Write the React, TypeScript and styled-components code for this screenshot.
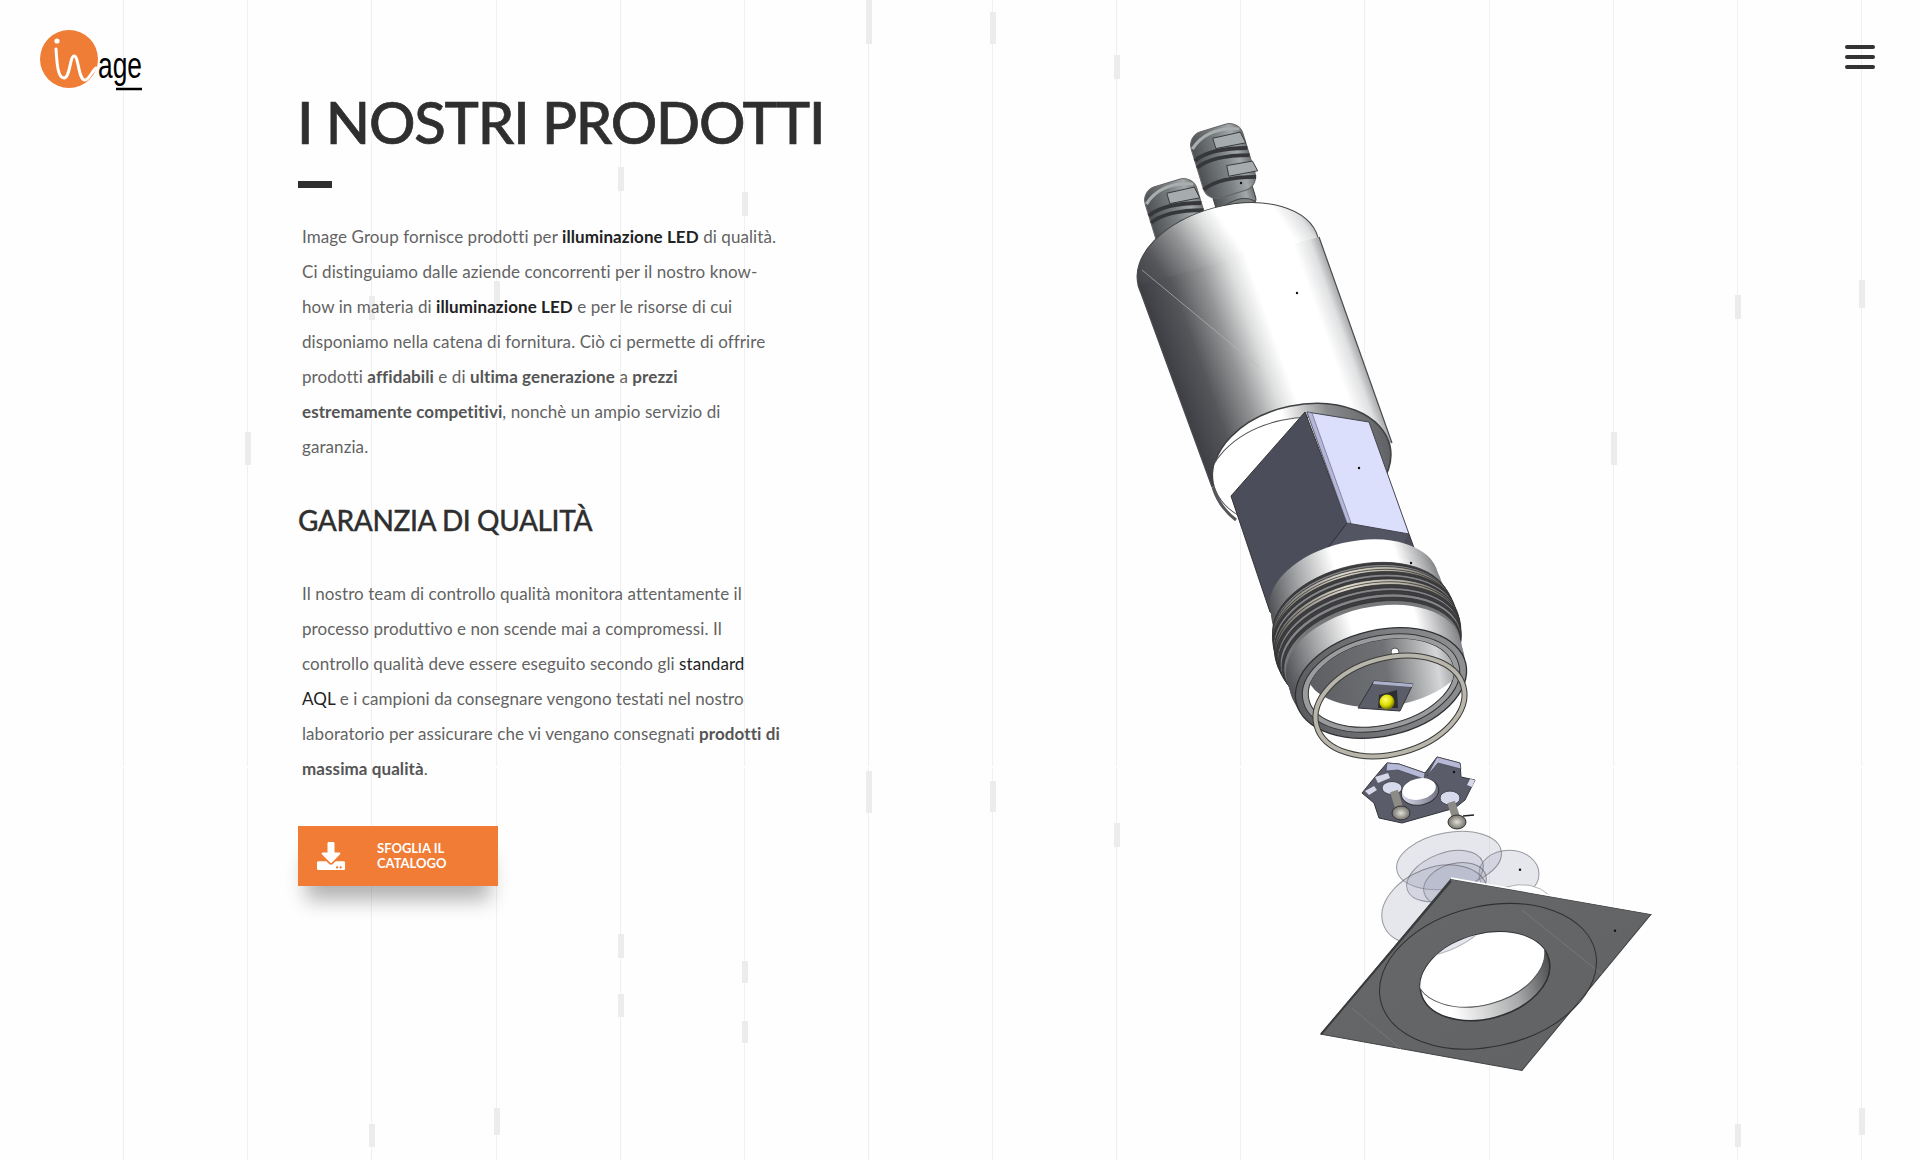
import React from 'react';
import styled, { createGlobalStyle } from 'styled-components';
import { FaDownload } from 'react-icons/fa';

const GlobalStyle = createGlobalStyle`
  html, body { margin: 0; padding: 0; background: #fefefe; }
`;

// [column, top, height] of the grey drops that sit on the background lines
const drops = [
  [7, 0, 44], [8, 12, 32], [9, 55, 24], [5, 167, 24], [6, 192, 24], [15, 280, 28], [14, 295, 24],
  [3, 296, 24], [4, 281, 27], [2, 432, 33], [13, 432, 33], [7, 771, 42], [8, 781, 31], [9, 823, 24],
  [5, 934, 24], [6, 961, 22], [5, 994, 23], [6, 1021, 22], [4, 1108, 27], [3, 1124, 23], [14, 1124, 23], [15, 1108, 27],
];

const columns = Array.from({ length: 15 }, (_, i) => i + 1);

const Logo = () => (
  <LogoSvg viewBox="0 0 120 64">
    <circle cx="29" cy="30" r="29" fill="#ef7d35" />
    <circle cx="17" cy="12" r="2.6" fill="#fff" />
    <path
      d="M16 20 C17 36 18 49 24 49 C30 49 30 27 34 27 C39 27 38 51 45 51 C49 51 52 42 56 39"
      fill="none"
      stroke="#fff"
      strokeWidth="3"
      strokeLinecap="round"
    />
    <text x="58" y="49" fontFamily="'Liberation Sans', sans-serif" fontSize="36" textLength="44" lengthAdjust="spacingAndGlyphs">
      age
    </text>
    <path d="M76 60 H102" stroke="#000" strokeWidth="2.5" />
  </LogoSvg>
);

const Gland = ({ x, y, neck }: { x: number; y: number; neck?: boolean }) => (
  <g transform={`translate(${x} ${y}) rotate(-17) scale(1.08)`}>
    {neck && (
      <>
        <rect x="-19" y="58" width="38" height="20" rx="5" fill="url(#glandGrad)" stroke="#444" />
        <ellipse cx="1" cy="78" rx="16" ry="8" fill="#7d8182" stroke="#444" />
        <ellipse cx="1" cy="81" rx="9" ry="6" fill="#c4c8c8" stroke="#555" />
      </>
    )}
    <rect x="-25" y="0" width="50" height="64" rx="13" fill="url(#glandGrad)" stroke="#666" />
    <path d="M-25 24 Q-8 17 25 27 M-25 31 Q-8 24 25 34 M-25 52 Q-8 45 25 55" stroke="#35373a" strokeWidth="3.5" fill="none" />
    <path d="M-3 9 L23 11 L25 22 L-3 19 Z M2 37 L26 40 L28 50 L1 47 Z" fill="#a6acad" stroke="#35373a" strokeWidth="0.8" />
    <path d="M-24 13 Q-5 -3 23 8" stroke="#a9aeaf" strokeWidth="3" fill="none" />
  </g>
);

const Product = () => {
  // rings of the threaded part, from the back end to the open front
  const ring = (t: number) => ({ cx: 1352 + 26 * t, cy: 592 + 91 * t });
  const stack: [number, string, number][] = [
    [0, 'url(#band)', 86], [0.05, 'url(#band)', 86], [0.1, 'url(#band)', 87], [0.15, 'url(#band)', 87], [0.2, 'url(#band)', 88], [0.24, 'url(#band)', 88],
    [0.28, '#3d3d3f', 90], [0.31, '#85868a', 91], [0.34, 'url(#beige)', 92], [0.37, 'url(#beige)', 92], [0.4, '#3d3d3f', 93], [0.43, '#85868a', 93],
    [0.46, '#3d3d3f', 93], [0.49, 'url(#beige)', 94], [0.52, 'url(#beige)', 94], [0.55, '#3d3d3f', 94], [0.58, '#85868a', 93], [0.61, '#3d3d3f', 93],
    [0.64, '#85868a', 92], [0.67, '#3d3d3f', 91], [0.7, '#77787a', 90],
    [0.74, 'url(#band)', 89], [0.79, 'url(#band)', 89], [0.84, 'url(#band)', 89], [0.89, 'url(#band)', 89], [0.94, 'url(#band)', 88],
  ];

  return (
    <ProductSvg viewBox="1100 110 580 970">
      <defs>
        <linearGradient id="bodyGrad" gradientUnits="userSpaceOnUse" x1="1136" y1="290" x2="1313" y2="227">
          <stop offset="0" stopColor="#3c3d42" />
          <stop offset="0.18" stopColor="#55565a" />
          <stop offset="0.35" stopColor="#939495" />
          <stop offset="0.5" stopColor="#dcdddd" />
          <stop offset="0.6" stopColor="#fff" />
          <stop offset="0.86" stopColor="#fff" />
          <stop offset="0.95" stopColor="#dfe0e1" />
          <stop offset="1" stopColor="#a8a9aa" />
        </linearGradient>
        <linearGradient id="rimGrad" x1="0" y1="0" x2="1" y2="0">
          <stop offset="0.45" stopColor="#fff" />
          <stop offset="0.7" stopColor="#8a8b8d" />
          <stop offset="1" stopColor="#5f6063" />
        </linearGradient>
        <linearGradient id="glandGrad" x1="0" y1="0" x2="1" y2="0">
          <stop offset="0" stopColor="#4d5052" />
          <stop offset="0.5" stopColor="#7b8082" />
          <stop offset="0.8" stopColor="#a3a9aa" />
          <stop offset="1" stopColor="#6f7375" />
        </linearGradient>
        <linearGradient id="band" x1="0" y1="0" x2="1" y2="0">
          <stop offset="0" stopColor="#505154" />
          <stop offset="0.2" stopColor="#a5a6a8" />
          <stop offset="0.42" stopColor="#fff" />
          <stop offset="0.78" stopColor="#fff" />
          <stop offset="1" stopColor="#818285" />
        </linearGradient>
        <linearGradient id="beige" x1="0" y1="0" x2="1" y2="0">
          <stop offset="0" stopColor="#5e5d5a" />
          <stop offset="0.45" stopColor="#ded9cc" />
          <stop offset="0.75" stopColor="#b9b4a8" />
          <stop offset="1" stopColor="#5e5d5a" />
        </linearGradient>
        <linearGradient id="flangeGrad" x1="0" y1="0" x2="1" y2="0">
          <stop offset="0" stopColor="#5a5b5e" />
          <stop offset="0.6" stopColor="#7d7e81" />
          <stop offset="1" stopColor="#8f9092" />
        </linearGradient>
        <linearGradient id="backWall" x1="0" y1="0" x2="1" y2="0">
          <stop offset="0" stopColor="#5d5e61" />
          <stop offset="0.5" stopColor="#707174" />
          <stop offset="0.82" stopColor="#d5d6d7" />
          <stop offset="1" stopColor="#77787a" />
        </linearGradient>
        <linearGradient id="holeWall" x1="0" y1="0" x2="1" y2="0">
          <stop offset="0.2" stopColor="#fff" />
          <stop offset="0.7" stopColor="#a9aaab" />
          <stop offset="1" stopColor="#4d4e50" />
        </linearGradient>
        <linearGradient id="plateGrad" x1="0" y1="0" x2="1" y2="1">
          <stop offset="0" stopColor="#66686a" />
          <stop offset="1" stopColor="#606264" />
        </linearGradient>
        <linearGradient id="bracketWall" x1="0" y1="0" x2="1" y2="0">
          <stop offset="0" stopColor="#d5d7e6" />
          <stop offset="1" stopColor="#6d6f80" />
        </linearGradient>
        <radialGradient id="ledGrad" cx="0.4" cy="0.35" r="0.7">
          <stop offset="0" stopColor="#ffff70" />
          <stop offset="0.55" stopColor="#dcdc00" />
          <stop offset="1" stopColor="#5e5e00" />
        </radialGradient>
        <radialGradient id="screwGrad" cx="0.5" cy="0.5" r="0.6">
          <stop offset="0" stopColor="#e2e0d6" />
          <stop offset="1" stopColor="#5c5b56" />
        </radialGradient>
        <clipPath id="rimClip">
          <ellipse cx="1300" cy="465" rx="90" ry="60" transform="rotate(-12 1300 465)" />
        </clipPath>
        <clipPath id="frontClip">
          <ellipse cx="1379" cy="683" rx="74" ry="42" transform="rotate(-13 1379 683)" />
        </clipPath>
        <clipPath id="holeClip">
          <ellipse cx="1483" cy="962" rx="66" ry="41" transform="rotate(-14 1483 962)" />
        </clipPath>
      </defs>

      {/* cable glands */}
      <Gland x={1165} y={183} />
      <Gland x={1211} y={128} neck />

      {/* main housing */}
      <ellipse cx="1226" cy="261" rx="93" ry="55" transform="rotate(-15 1226 261)" fill="url(#bodyGrad)" stroke="#444" />
      <path d="M1136 285 L1317 237 L1390 443 L1210 487 Z" fill="url(#bodyGrad)" />
      <path d="M1136 285 L1210 487 M1317 237 L1390 443" stroke="#4a4b4e" strokeWidth="1.2" />
      <path d="M1140 270 L1257 367" stroke="#b6b7b8" strokeWidth="0.7" />
      <ellipse cx="1300" cy="465" rx="90" ry="60" transform="rotate(-12 1300 465)" fill="url(#rimGrad)" stroke="#3f4042" strokeWidth="1.6" />
      <g clipPath="url(#rimClip)">
        <ellipse cx="1292" cy="479" rx="88" ry="60" transform="rotate(-12 1292 479)" fill="#fff" stroke="#55565a" />
      </g>
      <path d="M1211 487 Q1217 507 1234 520" stroke="#55565a" strokeWidth="3" fill="none" />
      <circle cx="1295" cy="293" r="1.2" fill="#111" />
      <circle cx="1239" cy="183" r="1.2" fill="#111" />

      {/* electronics box */}
      <path d="M1303 412 L1229 496 L1268 612 L1300 640 L1420 570 L1407 534 L1345 523 Z" fill="#4c4d5a" stroke="#333" />
      <path d="M1345 523 L1407 534 L1393 556 L1290 600 Z" fill="#545563" />
      <path d="M1345 523 L1290 594" stroke="#2e2f36" />
      <path d="M1305 412 L1367 422 L1407 534 L1345 523 Z" fill="#dcdffb" stroke="#44454f" />
      <path d="M1305 412 L1310 413 L1349 523 L1345 523 Z" fill="#b4b7d8" stroke="#5a5b70" strokeWidth="0.6" />
      <circle cx="1357" cy="468" r="1.2" fill="#111" />

      {/* threaded part, painted back to front */}
      {stack.map(([t, fill, rx]) => {
        const { cx, cy } = ring(t);
        return (
          <ellipse
            key={t}
            cx={cx}
            cy={cy}
            rx={rx}
            ry={rx * 0.585}
            transform={`rotate(-13 ${cx} ${cy})`}
            fill={fill}
            stroke={t < 0.28 || t > 0.72 ? 'none' : '#2e2e30'}
            strokeWidth="0.7"
          />
        );
      })}
      <circle cx="1409" cy="563" r="1.2" fill="#111" />

      {/* open front */}
      <ellipse cx="1379" cy="683" rx="87" ry="53" transform="rotate(-13 1379 683)" fill="url(#flangeGrad)" stroke="#2f3032" strokeWidth="1.3" />
      <ellipse cx="1379" cy="683" rx="80" ry="47" transform="rotate(-13 1379 683)" fill="#9a9b9d" stroke="#333" />
      <ellipse cx="1379" cy="683" rx="74" ry="42" transform="rotate(-13 1379 683)" fill="#fff" stroke="#333" />
      <g clipPath="url(#frontClip)">
        <ellipse cx="1384" cy="664" rx="80" ry="42" transform="rotate(-8 1384 664)" fill="url(#backWall)" />
      </g>
      <circle cx="1393" cy="652" r="4" fill="#fff" stroke="#555" />
      <path d="M1372 681 L1411 684 L1398 711 L1356 708 Z" fill="#5b5d69" stroke="#33343a" />
      <path d="M1372 681 L1411 684 L1410 687 L1371 684 Z" fill="#aeb1cc" />
      <path d="M1377 695 L1395 690 L1396 708 L1376 708 Z" fill="#2e2e30" />
      <circle cx="1385" cy="702" r="7.5" fill="url(#ledGrad)" />

      {/* o-ring */}
      <ellipse cx="1388" cy="706" rx="76" ry="48" transform="rotate(-15 1388 706)" fill="none" stroke="#3b3b3a" strokeWidth="6" />
      <ellipse cx="1388" cy="706" rx="76" ry="48" transform="rotate(-15 1388 706)" fill="none" stroke="#b8b5aa" strokeWidth="4" />

      {/* bracket with screws */}
      <path
        d="M1385 763 L1397 764 L1423 773 L1435 757 L1458 763 L1459 777 L1473 780 L1463 800 L1453 808 L1400 823 L1377 818 L1372 803 L1360 793 L1373 777 Z"
        fill="#5a5c6a"
        stroke="#33343b"
      />
      <path d="M1385 763 L1397 764 L1423 773 L1422 779 L1396 770 L1384 771 Z M1435 757 L1458 763 L1459 769 L1436 763 L1425 776 Z" fill="#b6bad6" stroke="#44454f" strokeWidth="0.7" />
      <path d="M1373 777 L1386 773 L1388 778 L1376 783 Z M1363 791 L1372 786 L1375 790 L1367 795 Z M1468 779 L1473 780 L1470 787 L1465 785 Z" fill="#d6d8ea" />
      <ellipse cx="1418" cy="792" rx="19" ry="13" transform="rotate(-12 1418 792)" fill="url(#bracketWall)" stroke="#333" />
      <ellipse cx="1417" cy="789" rx="17" ry="10.5" transform="rotate(-12 1417 789)" fill="#fff" />
      <ellipse cx="1390" cy="788" rx="10" ry="6.5" fill="#d7d9ec" stroke="#44454f" />
      <ellipse cx="1448" cy="798" rx="10" ry="7" fill="#d7d9ec" stroke="#44454f" />
      <path d="M1392 791 L1398 811 M1449 802 L1455 820" stroke="#8c8b85" strokeWidth="8" />
      <ellipse cx="1399" cy="813" rx="9" ry="7" fill="url(#screwGrad)" stroke="#333" />
      <ellipse cx="1455" cy="822" rx="9" ry="7" fill="url(#screwGrad)" stroke="#333" />
      <path d="M1461 816 L1472 815" stroke="#222" strokeWidth="1.5" />
      <circle cx="1452" cy="772" r="1.2" fill="#111" />

      <g transform="translate(0 -18.4) scale(1 1.034)">
        {/* transparent lens */}
        <g fill="#9a9eb8" fillOpacity="0.24" stroke="#4c4d55" strokeOpacity="0.55">
          <ellipse cx="1507" cy="863" rx="30" ry="23" />
          <ellipse cx="1447" cy="850" rx="53" ry="27" transform="rotate(-10 1447 850)" />
          <ellipse cx="1443" cy="865" rx="40" ry="22" transform="rotate(-20 1443 865)" />
          <ellipse cx="1453" cy="873" rx="32" ry="20" transform="rotate(-15 1453 873)" />
          <ellipse cx="1433" cy="893" rx="55" ry="36" transform="rotate(-20 1433 893)" />
        </g>

        {/* square front plate */}
        <path d="M1503 876 Q1530 868 1548 884 Z" fill="#fff" stroke="#888" strokeWidth="0.6" />
        <path d="M1449 868 L1649 902 L1520 1053 L1319 1018 Z" fill="url(#plateGrad)" stroke="#3f4042" />
        <path d="M1449 867 L1649 901" stroke="#fff" strokeWidth="1.6" />
        <path d="M1449 870 L1319 1018" stroke="#3a3b3d" strokeWidth="2" />
        <path d="M1520 898 L1600 960 M1350 993 L1400 1033" stroke="#7c7e80" strokeWidth="0.7" />
        <ellipse cx="1486" cy="962" rx="110" ry="68" transform="rotate(-12 1486 962)" fill="none" stroke="#2f3032" />
        <ellipse cx="1483" cy="962" rx="66" ry="41" transform="rotate(-14 1483 962)" fill="url(#holeWall)" stroke="#2f3032" strokeWidth="1.5" />
        <g clipPath="url(#holeClip)">
          <ellipse cx="1478" cy="949" rx="66" ry="41" transform="rotate(-14 1478 949)" fill="#fff" stroke="#555" />
          <ellipse cx="1432" cy="900" rx="66" ry="40" transform="rotate(-20 1432 900)" fill="#a9adcb" fillOpacity="0.3" stroke="#777" strokeOpacity="0.5" />
        </g>
        <circle cx="1613" cy="918" r="1.2" fill="#111" />
        <circle cx="1518" cy="859" r="1.2" fill="#111" />
      </g>
    </ProductSvg>
  );
};

const App = () => {
  return (
    <Page>
      <GlobalStyle />
      <Backdrop>
        {columns.map((column) => (
          <Column key={column}>
            {drops
              .filter(([c]) => c === column)
              .map(([, top, height]) => (
                <Drop key={top} $top={top} $height={height} />
              ))}
          </Column>
        ))}
      </Backdrop>

      <LogoSlot>
        <Logo />
      </LogoSlot>

      <Copy>
        <Title>I NOSTRI PRODOTTI</Title>
        <Rule />
        <Text $gap={31}>
          Image Group fornisce prodotti per <Dark>illuminazione LED</Dark> di qualità.<br />
          Ci distinguiamo dalle aziende concorrenti per il nostro know-<br />
          how in materia di <Dark>illuminazione LED</Dark> e per le risorse di cui<br />
          disponiamo nella catena di fornitura. Ciò ci permette di offrire<br />
          prodotti <Strong>affidabili</Strong> e di <Strong>ultima generazione</Strong> a <Strong>prezzi</Strong><br />
          <Strong>estremamente competitivi</Strong>, nonchè un ampio servizio di<br />
          garanzia.
        </Text>
        <Subtitle>GARANZIA DI QUALITÀ</Subtitle>
        <Text $gap={36}>
          Il nostro team di controllo qualità monitora attentamente il<br />
          processo produttivo e non scende mai a compromessi. Il<br />
          controllo qualità deve essere eseguito secondo gli <Term>standard</Term><br />
          <Term>AQL</Term> e i campioni da consegnare vengono testati nel nostro<br />
          laboratorio per assicurare che vi vengano consegnati <Strong>prodotti di</Strong><br />
          <Strong>massima qualità</Strong>.
        </Text>
        <CatalogButton>
          <FaDownload size={28} />
          <span>SFOGLIA IL<br />CATALOGO</span>
        </CatalogButton>
      </Copy>

      <Figure>
        <Product />
      </Figure>

      <MenuButton aria-label="Menu">
        <MenuBar />
        <MenuBar />
        <MenuBar />
      </MenuButton>
    </Page>
  );
};

const Page = styled.div`
  position: relative;
  display: flex;
  align-items: flex-start;
  height: 1160px;
  overflow: hidden;
  background: #fefefe;
  font-family: Lato, "Liberation Sans", sans-serif;
`;

const Backdrop = styled.div`
  position: absolute;
  top: 0;
  left: 0;
  bottom: 0;
  display: flex;
  pointer-events: none;
`;

const Column = styled.div`
  position: relative;
  width: 124.13px;
  height: 100%;
  box-sizing: border-box;
  border-right: 1px solid #f0f0f0;

  &::after {
    content: "";
    position: absolute;
    right: -1px;
    top: 766px;
    width: 1px;
    height: 2px;
    background: #fefefe;
  }
`;

const Drop = styled.i<{ $top: number; $height: number }>`
  position: absolute;
  right: -4px;
  top: ${(p) => p.$top}px;
  width: 6px;
  height: ${(p) => p.$height}px;
  background: #ececec;
`;

const LogoSlot = styled.div`
  position: relative;
  flex: 0 0 298px;
  box-sizing: border-box;
  padding: 29px 0 0 40px;
`;

const LogoSvg = styled.svg`
  display: block;
  width: 120px;
  height: 64px;
`;

const Copy = styled.div`
  position: relative;
  flex: 0 0 560px;
  padding-top: 85px;
`;

const Title = styled.h1`
  margin: 0 0 0 -1px;
  font-size: 58px;
  line-height: 74px;
  font-weight: 500;
  letter-spacing: -1.2px;
  -webkit-text-stroke: 0.7px #2f2f2f;
  color: #2f2f2f;
  white-space: nowrap;
`;

const Rule = styled.div`
  width: 34px;
  height: 7px;
  margin-top: 22px;
  background: #2f2f2f;
`;

const Text = styled.p<{ $gap: number }>`
  margin: ${(p) => p.$gap}px 0 0;
  padding-left: 4px;
  font-size: 17px;
  line-height: 35px;
  letter-spacing: 0.08px;
  color: #636363;
  white-space: nowrap;
`;

const Strong = styled.strong`
  font-weight: 700;
  color: #555;
`;

const Dark = styled.strong`
  font-weight: 700;
  color: #222;
`;

const Term = styled.span`
  color: #222;
`;

const Subtitle = styled.h2`
  margin: 36px 0 0;
  font-size: 28px;
  line-height: 40px;
  font-weight: 500;
  letter-spacing: -0.4px;
  -webkit-text-stroke: 0.3px #2f2f2f;
  color: #2f2f2f;
`;

const CatalogButton = styled.button`
  display: flex;
  align-items: center;
  gap: 32px;
  width: 200px;
  height: 60px;
  margin-top: 40px;
  padding: 0 0 0 19px;
  border: none;
  background: #f07c35;
  color: #fff;
  box-shadow: 0 22px 20px -8px rgba(0, 0, 0, 0.3);
  font-family: inherit;
  font-size: 13px;
  line-height: 15px;
  font-weight: 700;
  text-align: left;
`;

const Figure = styled.div`
  position: relative;
  flex: 0 0 580px;
  margin-left: 244px;
  padding-top: 110px;
`;

const ProductSvg = styled.svg`
  display: block;
  width: 580px;
  height: 970px;
`;

const MenuButton = styled.button`
  position: relative;
  display: flex;
  flex-direction: column;
  gap: 6px;
  margin: 45px 0 0 163px;
  padding: 0;
  border: none;
  background: none;
`;

const MenuBar = styled.span`
  display: block;
  width: 30px;
  height: 4px;
  border-radius: 2px;
  background: #333;
`;

export default App;
